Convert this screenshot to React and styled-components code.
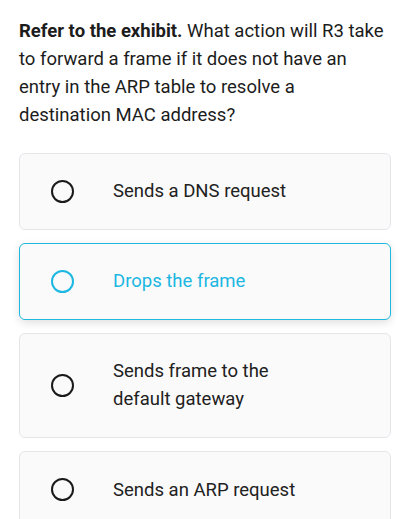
import React, { useState } from 'react'
import styled, { createGlobalStyle } from 'styled-components'

const GlobalStyle = createGlobalStyle`
  body {
    margin: 0;
    background: #fff;
    font-family: Roboto, "Liberation Sans", sans-serif;
    color: #212121;
  }
`

const options = [
  { id: 'a', text: 'Sends a DNS request' },
  { id: 'b', text: 'Drops the frame' },
  { id: 'c', text: <>Sends frame to the<br />default gateway</> },
  { id: 'd', text: 'Sends an ARP request' },
]

const App = () => {
  const [selected, setSelected] = useState('b')

  return (
    <Page>
      <GlobalStyle />
      <Question>
        <strong>Refer to the exhibit.</strong> What action will R3 take to forward a frame if it does not
        have an entry in the ARP table to resolve a destination MAC address?
      </Question>
      <Options>
        {options.map((o) => (
          <Option key={o.id} active={selected === o.id} onClick={() => setSelected(o.id)}>
            <Radio active={selected === o.id} />
            <Label>{o.text}</Label>
          </Option>
        ))}
      </Options>
    </Page>
  )
}

const Page = styled.div`
  padding: 17px 28px 0 19px;
`

const Question = styled.p`
  margin: 0 0 24px;
  font-size: 18.5px;
  line-height: 28px;
  color: #1c1c1c;

  strong {
    font-weight: 700;
  }
`

const Options = styled.div`
  display: flex;
  flex-direction: column;
  gap: 13.5px;
`

const Option = styled.div.withConfig({ shouldForwardProp: (p) => p !== 'active' })`
  display: flex;
  align-items: center;
  gap: 39px;
  padding: 23.3px 20px 23.3px 31px;
  background: #fafafa;
  border: 1px solid ${({ active }) => (active ? '#1fb8de' : '#e4e6ea')};
  border-radius: 6px;
  box-shadow: ${({ active }) => (active ? '0 3px 8px rgba(0, 0, 0, 0.12)' : 'none')};
  color: ${({ active }) => (active ? '#1cb7e2' : '#212121')};
  cursor: pointer;
`

const Radio = styled.span.withConfig({ shouldForwardProp: (p) => p !== 'active' })`
  flex: none;
  box-sizing: border-box;
  width: 23px;
  height: 23px;
  border-radius: 50%;
  border: 2.5px solid ${({ active }) => (active ? '#1cb7e2' : '#1a1a1a')};
`

const Label = styled.div`
  font-size: 18.5px;
  line-height: 28px;
`

export default App
